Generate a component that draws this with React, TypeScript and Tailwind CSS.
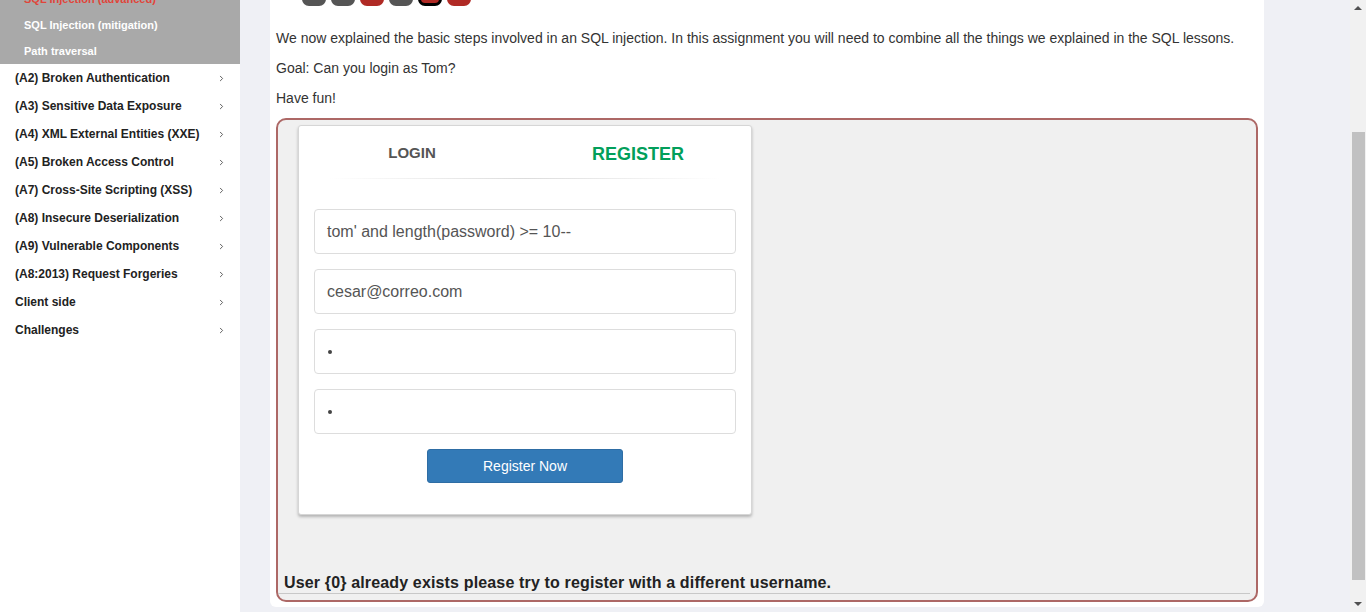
import { ChevronRight } from "lucide-react";

const lessons = [
  "(A2) Broken Authentication",
  "(A3) Sensitive Data Exposure",
  "(A4) XML External Entities (XXE)",
  "(A5) Broken Access Control",
  "(A7) Cross-Site Scripting (XSS)",
  "(A8) Insecure Deserialization",
  "(A9) Vulnerable Components",
  "(A8:2013) Request Forgeries",
  "Client side",
  "Challenges",
];

const pages = [
  { color: "bg-[#555555]", current: false },
  { color: "bg-[#555555]", current: false },
  { color: "bg-[#b02a25]", current: false },
  { color: "bg-[#555555]", current: false },
  { color: "bg-[#b02a25]", current: true },
  { color: "bg-[#b02a25]", current: false },
];

function Sidebar() {
  return (
    <aside className="w-[240px] shrink-0 bg-white">
      <div className="bg-[#a9a9a9] pl-6 -mt-[14px] flex flex-col text-[11px] font-bold text-white">
        <span className="h-[26px] leading-[26px] text-[#e0453a]">SQL Injection (advanced)</span>
        <span className="h-[26px] leading-[26px]">SQL Injection (mitigation)</span>
        <span className="h-[26px] leading-[26px]">Path traversal</span>
      </div>
      <ul className="flex flex-col">
        {lessons.map((name) => (
          <li
            key={name}
            className="h-[28px] pl-[15px] pr-[14px] flex items-center justify-between text-[12px] font-bold text-[#222]"
          >
            <span>{name}</span>
            <ChevronRight className="w-[9px] h-[9px] text-[#555]" strokeWidth={2.5} />
          </li>
        ))}
      </ul>
    </aside>
  );
}

function Field({ value }: { value: string }) {
  return (
    <div className="h-[45px] border border-[#dddddd] rounded-[4px] bg-white flex items-center pl-[12px] text-[16px] text-[#555]">
      {value}
    </div>
  );
}

function Dot() {
  return (
    <div className="h-[45px] border border-[#dddddd] rounded-[4px] bg-white flex items-center pl-[13px]">
      <span className="w-[4px] h-[4px] rounded-full bg-[#444]" />
    </div>
  );
}

function RegisterCard() {
  return (
    <div className="w-[454px] bg-white rounded-[3px] border border-[#d6d6d6] shadow-[0_2px_3px_rgba(0,0,0,0.25)] pb-[31px]">
      <div className="flex h-[52px] items-center pt-[2px]">
        <span className="w-1/2 text-center text-[15px] font-bold text-[#555]">LOGIN</span>
        <span className="w-1/2 text-center text-[18px] font-bold text-[#029f5b] pt-[2px]">REGISTER</span>
      </div>
      <div className="mx-[30px] h-px bg-gradient-to-r from-transparent via-[#dcdcdc] to-transparent" />
      <div className="px-[15px] pt-[30px] flex flex-col gap-[15px]">
        <Field value="tom' and length(password) >= 10--" />
        <Field value="cesar@correo.com" />
        <Dot />
        <Dot />
        <div className="flex justify-center">
          <button className="w-[196px] h-[34px] bg-[#337ab7] border border-[#2e6da4] rounded-[3px] text-white text-[14px]">
            Register Now
          </button>
        </div>
      </div>
    </div>
  );
}

function Lesson() {
  return (
    <div className="w-[994px] bg-white rounded-b-[6px] px-[6px] pb-[5px] text-[14px] text-[#333]">
      <div className="flex items-center gap-[6px] -mt-[19px] h-[26px] pl-[10px]">
        <span className="w-[4px] h-[4px] rounded-full bg-[#777]" />
        <div className="flex gap-[5px] ml-[6px]">
          {pages.map((p, i) => (
            <span
              key={i}
              className={`w-[24px] h-[24px] rounded-[7px] ${p.color} ${p.current ? "border-[3px] border-black" : ""}`}
            />
          ))}
        </div>
        <span className="w-[4px] h-[4px] rounded-full bg-[#777] ml-[6px]" />
      </div>
      <p className="mt-[21px] leading-[20px]">
        We now explained the basic steps involved in an SQL injection. In this assignment you will need to combine all the things we explained in the SQL lessons.
      </p>
      <p className="mt-[10px] leading-[20px]">Goal: Can you login as Tom?</p>
      <p className="mt-[10px] leading-[20px]">Have fun!</p>
      <div className="mt-[10px] h-[484px] border-2 border-[#ad6866] rounded-[10px] bg-[#f0f0f0] flex flex-col pl-[20px] pr-[6px] pt-[5px]">
        <RegisterCard />
        <div className="flex-1" />
        <p className="-ml-[14px] text-[16px] tracking-[0.15px] font-bold text-[#222] leading-[20px]">
          User {"{0}"} already exists please try to register with a different username.
        </p>
        <div className="-ml-[20px] h-px bg-[#c8c8c8] mb-[6px]" />
      </div>
    </div>
  );
}

function Scrollbar() {
  return (
    <div className="w-[16px] shrink-0 bg-[#f1f1f1] flex flex-col items-center">
      <span className="mt-[6px] w-0 h-0 border-x-[4px] border-x-transparent border-b-[4px] border-b-[#505050]" />
      <div className="mt-[122px] w-[13px] h-[448px] bg-[#c1c1c1]" />
      <div className="flex-1" />
      <span className="mb-[6px] w-0 h-0 border-x-[4px] border-x-transparent border-t-[4px] border-t-[#505050]" />
    </div>
  );
}

export default function App() {
  return (
    <div className="h-[612px] w-[1366px] overflow-hidden flex font-['Liberation_Sans',Arial,sans-serif] bg-[#eff0f5]">
      <Sidebar />
      <main className="flex-1 pl-[30px]">
        <Lesson />
      </main>
      <Scrollbar />
    </div>
  );
}
